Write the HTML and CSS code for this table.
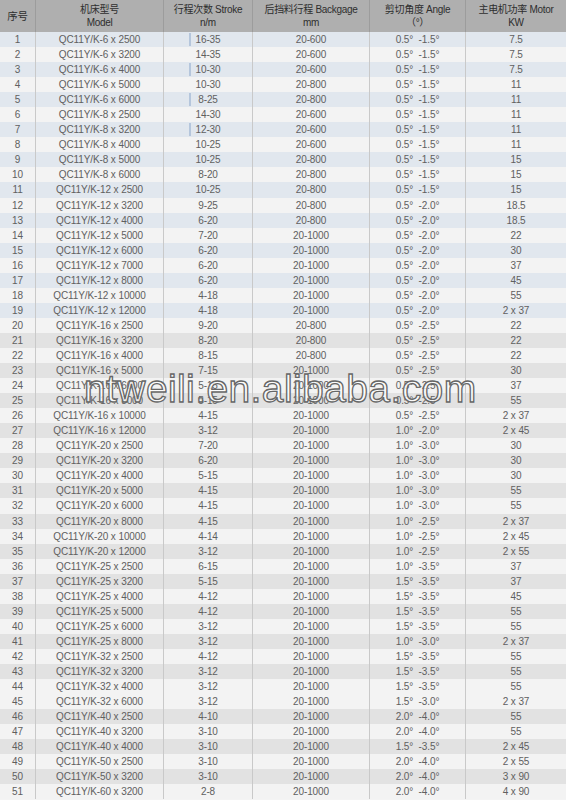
FILE: index.html
```html
<!DOCTYPE html>
<html>
<head>
<meta charset="utf-8">
<link rel="stylesheet" href="styles.css">
</head>
<body>
<div class="sheet">
  <div class="row head">
    <div class="c">序号</div>
    <div class="c">机床型号<br>Model</div>
    <div class="c">行程次数 Stroke<br>n/m</div>
    <div class="c">后挡料行程 Backgage<br>mm</div>
    <div class="c">剪切角度 Angle<br>（°）</div>
    <div class="c">主电机功率 Motor<br>KW</div>
  </div>
  <div class="row b"><div class="c">1</div><div class="c">QC11Y/K-6 x 2500</div><div class="c tick">16-35</div><div class="c">20-600</div><div class="c">0.5°&nbsp; -1.5°</div><div class="c">7.5</div></div>
  <div class="row w"><div class="c">2</div><div class="c">QC11Y/K-6 x 3200</div><div class="c">14-35</div><div class="c">20-600</div><div class="c">0.5°&nbsp; -1.5°</div><div class="c">7.5</div></div>
  <div class="row b"><div class="c">3</div><div class="c">QC11Y/K-6 x 4000</div><div class="c tick">10-30</div><div class="c">20-600</div><div class="c">0.5°&nbsp; -1.5°</div><div class="c">7.5</div></div>
  <div class="row w"><div class="c">4</div><div class="c">QC11Y/K-6 x 5000</div><div class="c">10-30</div><div class="c">20-800</div><div class="c">0.5°&nbsp; -1.5°</div><div class="c">11</div></div>
  <div class="row b"><div class="c">5</div><div class="c">QC11Y/K-6 x 6000</div><div class="c tick">8-25</div><div class="c">20-800</div><div class="c">0.5°&nbsp; -1.5°</div><div class="c">11</div></div>
  <div class="row w"><div class="c">6</div><div class="c">QC11Y/K-8 x 2500</div><div class="c">14-30</div><div class="c">20-600</div><div class="c">0.5°&nbsp; -1.5°</div><div class="c">11</div></div>
  <div class="row b"><div class="c">7</div><div class="c">QC11Y/K-8 x 3200</div><div class="c tick">12-30</div><div class="c">20-600</div><div class="c">0.5°&nbsp; -1.5°</div><div class="c">11</div></div>
  <div class="row w"><div class="c">8</div><div class="c">QC11Y/K-8 x 4000</div><div class="c">10-25</div><div class="c">20-600</div><div class="c">0.5°&nbsp; -1.5°</div><div class="c">11</div></div>
  <div class="row b"><div class="c">9</div><div class="c">QC11Y/K-8 x 5000</div><div class="c">10-25</div><div class="c">20-800</div><div class="c">0.5°&nbsp; -1.5°</div><div class="c">15</div></div>
  <div class="row w"><div class="c">10</div><div class="c">QC11Y/K-8 x 6000</div><div class="c">8-20</div><div class="c">20-800</div><div class="c">0.5°&nbsp; -1.5°</div><div class="c">15</div></div>
  <div class="row b"><div class="c">11</div><div class="c">QC11Y/K-12 x 2500</div><div class="c">10-25</div><div class="c">20-800</div><div class="c">0.5°&nbsp; -1.5°</div><div class="c">15</div></div>
  <div class="row w"><div class="c">12</div><div class="c">QC11Y/K-12 x 3200</div><div class="c">9-25</div><div class="c">20-800</div><div class="c">0.5°&nbsp; -2.0°</div><div class="c">18.5</div></div>
  <div class="row b"><div class="c">13</div><div class="c">QC11Y/K-12 x 4000</div><div class="c">6-20</div><div class="c">20-800</div><div class="c">0.5°&nbsp; -2.0°</div><div class="c">18.5</div></div>
  <div class="row w"><div class="c">14</div><div class="c">QC11Y/K-12 x 5000</div><div class="c">7-20</div><div class="c">20-1000</div><div class="c">0.5°&nbsp; -2.0°</div><div class="c">22</div></div>
  <div class="row b"><div class="c">15</div><div class="c">QC11Y/K-12 x 6000</div><div class="c">6-20</div><div class="c">20-1000</div><div class="c">0.5°&nbsp; -2.0°</div><div class="c">30</div></div>
  <div class="row w"><div class="c">16</div><div class="c">QC11Y/K-12 x 7000</div><div class="c">6-20</div><div class="c">20-1000</div><div class="c">0.5°&nbsp; -2.0°</div><div class="c">37</div></div>
  <div class="row b"><div class="c">17</div><div class="c">QC11Y/K-12 x 8000</div><div class="c">6-20</div><div class="c">20-1000</div><div class="c">0.5°&nbsp; -2.0°</div><div class="c">45</div></div>
  <div class="row w"><div class="c">18</div><div class="c">QC11Y/K-12 x 10000</div><div class="c">4-18</div><div class="c">20-1000</div><div class="c">0.5°&nbsp; -2.0°</div><div class="c">55</div></div>
  <div class="row b"><div class="c">19</div><div class="c">QC11Y/K-12 x 12000</div><div class="c">4-18</div><div class="c">20-1000</div><div class="c">0.5°&nbsp; -2.0°</div><div class="c">2 x 37</div></div>
  <div class="row w"><div class="c">20</div><div class="c">QC11Y/K-16 x 2500</div><div class="c">9-20</div><div class="c">20-800</div><div class="c">0.5°&nbsp; -2.5°</div><div class="c">22</div></div>
  <div class="row g"><div class="c">21</div><div class="c">QC11Y/K-16 x 3200</div><div class="c">8-20</div><div class="c">20-800</div><div class="c">0.5°&nbsp; -2.5°</div><div class="c">22</div></div>
  <div class="row w"><div class="c">22</div><div class="c">QC11Y/K-16 x 4000</div><div class="c">8-15</div><div class="c">20-800</div><div class="c">0.5°&nbsp; -2.5°</div><div class="c">22</div></div>
  <div class="row g"><div class="c">23</div><div class="c">QC11Y/K-16 x 5000</div><div class="c">7-15</div><div class="c">20-1000</div><div class="c">0.5°&nbsp; -2.5°</div><div class="c">30</div></div>
  <div class="row w"><div class="c">24</div><div class="c">QC11Y/K-16 x 6000</div><div class="c">5-15</div><div class="c">20-1000</div><div class="c">0.5°&nbsp; -2.5°</div><div class="c">37</div></div>
  <div class="row g"><div class="c">25</div><div class="c">QC11Y/K-16 x 8000</div><div class="c">5-15</div><div class="c">20-1000</div><div class="c">0.5°&nbsp; -2.5°</div><div class="c">55</div></div>
  <div class="row w"><div class="c">26</div><div class="c">QC11Y/K-16 x 10000</div><div class="c">4-15</div><div class="c">20-1000</div><div class="c">0.5°&nbsp; -2.5°</div><div class="c">2 x 37</div></div>
  <div class="row g"><div class="c">27</div><div class="c">QC11Y/K-16 x 12000</div><div class="c">3-12</div><div class="c">20-1000</div><div class="c">1.0°&nbsp; -2.0°</div><div class="c">2 x 45</div></div>
  <div class="row w"><div class="c">28</div><div class="c">QC11Y/K-20 x 2500</div><div class="c">7-20</div><div class="c">20-1000</div><div class="c">1.0°&nbsp; -3.0°</div><div class="c">30</div></div>
  <div class="row g"><div class="c">29</div><div class="c">QC11Y/K-20 x 3200</div><div class="c">6-20</div><div class="c">20-1000</div><div class="c">1.0°&nbsp; -3.0°</div><div class="c">30</div></div>
  <div class="row w"><div class="c">30</div><div class="c">QC11Y/K-20 x 4000</div><div class="c">5-15</div><div class="c">20-1000</div><div class="c">1.0°&nbsp; -3.0°</div><div class="c">30</div></div>
  <div class="row g"><div class="c">31</div><div class="c">QC11Y/K-20 x 5000</div><div class="c">4-15</div><div class="c">20-1000</div><div class="c">1.0°&nbsp; -3.0°</div><div class="c">55</div></div>
  <div class="row w"><div class="c">32</div><div class="c">QC11Y/K-20 x 6000</div><div class="c">4-15</div><div class="c">20-1000</div><div class="c">1.0°&nbsp; -3.0°</div><div class="c">55</div></div>
  <div class="row g"><div class="c">33</div><div class="c">QC11Y/K-20 x 8000</div><div class="c">4-15</div><div class="c">20-1000</div><div class="c">1.0°&nbsp; -2.5°</div><div class="c">2 x 37</div></div>
  <div class="row w"><div class="c">34</div><div class="c">QC11Y/K-20 x 10000</div><div class="c">4-14</div><div class="c">20-1000</div><div class="c">1.0°&nbsp; -2.5°</div><div class="c">2 x 45</div></div>
  <div class="row g"><div class="c">35</div><div class="c">QC11Y/K-20 x 12000</div><div class="c">3-12</div><div class="c">20-1000</div><div class="c">1.0°&nbsp; -2.5°</div><div class="c">2 x 55</div></div>
  <div class="row w"><div class="c">36</div><div class="c">QC11Y/K-25 x 2500</div><div class="c">6-15</div><div class="c">20-1000</div><div class="c">1.0°&nbsp; -3.5°</div><div class="c">37</div></div>
  <div class="row g"><div class="c">37</div><div class="c">QC11Y/K-25 x 3200</div><div class="c">5-15</div><div class="c">20-1000</div><div class="c">1.5°&nbsp; -3.5°</div><div class="c">37</div></div>
  <div class="row w"><div class="c">38</div><div class="c">QC11Y/K-25 x 4000</div><div class="c">4-12</div><div class="c">20-1000</div><div class="c">1.5°&nbsp; -3.5°</div><div class="c">45</div></div>
  <div class="row g"><div class="c">39</div><div class="c">QC11Y/K-25 x 5000</div><div class="c">4-12</div><div class="c">20-1000</div><div class="c">1.5°&nbsp; -3.5°</div><div class="c">55</div></div>
  <div class="row w"><div class="c">40</div><div class="c">QC11Y/K-25 x 6000</div><div class="c">3-12</div><div class="c">20-1000</div><div class="c">1.5°&nbsp; -3.5°</div><div class="c">55</div></div>
  <div class="row g"><div class="c">41</div><div class="c">QC11Y/K-25 x 8000</div><div class="c">3-12</div><div class="c">20-1000</div><div class="c">1.0°&nbsp; -3.0°</div><div class="c">2 x 37</div></div>
  <div class="row w"><div class="c">42</div><div class="c">QC11Y/K-32 x 2500</div><div class="c">4-12</div><div class="c">20-1000</div><div class="c">1.5°&nbsp; -3.5°</div><div class="c">55</div></div>
  <div class="row g"><div class="c">43</div><div class="c">QC11Y/K-32 x 3200</div><div class="c">3-12</div><div class="c">20-1000</div><div class="c">1.5°&nbsp; -3.5°</div><div class="c">55</div></div>
  <div class="row w"><div class="c">44</div><div class="c">QC11Y/K-32 x 4000</div><div class="c">3-12</div><div class="c">20-1000</div><div class="c">1.5°&nbsp; -3.5°</div><div class="c">55</div></div>
  <div class="row w"><div class="c">45</div><div class="c">QC11Y/K-32 x 6000</div><div class="c">3-12</div><div class="c">20-1000</div><div class="c">1.5°&nbsp; -3.0°</div><div class="c">2 x 37</div></div>
  <div class="row g"><div class="c">46</div><div class="c">QC11Y/K-40 x 2500</div><div class="c">4-10</div><div class="c">20-1000</div><div class="c">2.0°&nbsp; -4.0°</div><div class="c">55</div></div>
  <div class="row w"><div class="c">47</div><div class="c">QC11Y/K-40 x 3200</div><div class="c">3-10</div><div class="c">20-1000</div><div class="c">2.0°&nbsp; -4.0°</div><div class="c">55</div></div>
  <div class="row g"><div class="c">48</div><div class="c">QC11Y/K-40 x 4000</div><div class="c">3-10</div><div class="c">20-1000</div><div class="c">1.5°&nbsp; -3.5°</div><div class="c">2 x 45</div></div>
  <div class="row w"><div class="c">49</div><div class="c">QC11Y/K-50 x 2500</div><div class="c">3-10</div><div class="c">20-1000</div><div class="c">2.0°&nbsp; -4.0°</div><div class="c">2 x 55</div></div>
  <div class="row g"><div class="c">50</div><div class="c">QC11Y/K-50 x 3200</div><div class="c">3-10</div><div class="c">20-1000</div><div class="c">2.0°&nbsp; -4.0°</div><div class="c">3 x 90</div></div>
  <div class="row w"><div class="c">51</div><div class="c">QC11Y/K-60 x 3200</div><div class="c">2-8</div><div class="c">20-1000</div><div class="c">2.0°&nbsp; -4.0°</div><div class="c">4 x 90</div></div>
  <div class="watermark">ntweili.en.alibaba.com</div>
</div>
</body>
</html>
```

FILE: styles.css
```css
html, body {
  margin: 0;
  padding: 0;
  background: #f4f4f4;
}
.sheet {
  position: relative;
  width: 566px;
  height: 800px;
  overflow: hidden;
  font-family: "Liberation Sans", Arial, "Noto Sans CJK SC", sans-serif;
  color: #606060;
  font-size: 10px;
}
.row {
  display: grid;
  grid-template-columns: 36px 128px 89px 117px 96px 100px;
  height: 15.06px;
}
.row .c {
  display: flex;
  align-items: center;
  justify-content: center;
  border-right: 1px solid #c9c9c9;
  white-space: nowrap;
  letter-spacing: -0.1px;
}
.row .c:last-child {
  border-right: none;
}
.head {
  height: 32px;
  background: #afafaf;
  color: #2e2e2e;
  font-size: 10px;
  line-height: 13px;
}
.head .c {
  text-align: center;
  border-right: 1px solid #9c9c9c;
  letter-spacing: -0.3px;
}
.head .c:first-child {
  font-size: 10.5px;
}
.b { background: #e1e7ee; }
.w { background: #f3f3f3; }
.g { background: #e2e2e2; }
.tick {
  position: relative;
}
.tick::before {
  content: "";
  position: absolute;
  left: 25px;
  top: 1px;
  bottom: 1px;
  width: 2px;
  background: #b5c6dc;
}
.watermark {
  position: absolute;
  left: 84px;
  top: 367px;
  font-family: "Liberation Sans", Arial, sans-serif;
  font-size: 39px;
  letter-spacing: 0.4px;
  color: rgba(255, 255, 255, 0.8);
  -webkit-text-stroke: 1.3px #666666;
  white-space: nowrap;
}
```
